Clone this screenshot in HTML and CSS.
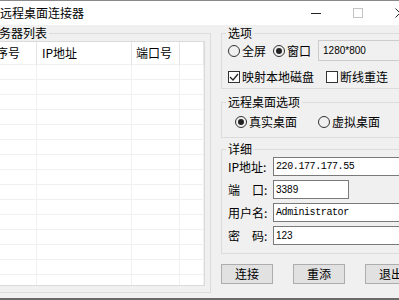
FILE: index.html
```html
<!DOCTYPE html>
<html lang="zh-CN">
<head>
    <meta charset="UTF-8">
    <title>远程桌面连接器</title>
    <link rel="stylesheet" href="styles.css">
</head>
<body>
<div class="window">
    <div class="titlebar">
        <span class="title">远程桌面连接器</span>
        <div class="caption">
            <span class="cap-btn"><i class="ico-min"></i></span>
            <span class="cap-btn"><i class="ico-max"></i></span>
            <span class="cap-btn">
                <svg width="10" height="10" viewBox="0 0 10 10"><path d="M0.5 0.5 L9.5 9.5 M9.5 0.5 L0.5 9.5" stroke="#222" stroke-width="1" fill="none"/></svg>
            </span>
        </div>
    </div>

    <div class="client">
        <!-- server list -->
        <fieldset class="group server-group">
            <legend>服务器列表</legend>
            <div class="list">
                <table>
                    <thead>
                        <tr><th class="c-no">序号</th><th class="c-ip">IP地址</th><th class="c-port">端口号</th><th class="c-rest"></th></tr>
                    </thead>
                    <tbody>
                        <tr><td></td><td></td><td></td><td></td></tr>
                        <tr><td></td><td></td><td></td><td></td></tr>
                        <tr><td></td><td></td><td></td><td></td></tr>
                        <tr><td></td><td></td><td></td><td></td></tr>
                        <tr><td></td><td></td><td></td><td></td></tr>
                        <tr><td></td><td></td><td></td><td></td></tr>
                        <tr><td></td><td></td><td></td><td></td></tr>
                        <tr><td></td><td></td><td></td><td></td></tr>
                        <tr><td></td><td></td><td></td><td></td></tr>
                        <tr><td></td><td></td><td></td><td></td></tr>
                        <tr><td></td><td></td><td></td><td></td></tr>
                        <tr><td></td><td></td><td></td><td></td></tr>
                        <tr><td></td><td></td><td></td><td></td></tr>
                        <tr><td></td><td></td><td></td><td></td></tr>
                        <tr><td></td><td></td><td></td><td></td></tr>
                    </tbody>
                </table>
            </div>
        </fieldset>

        <div class="side">
            <fieldset class="group opt-group">
                <legend>选项</legend>
                <div class="row row-screen">
                    <label class="radio"><span class="dot"></span>全屏</label>
                    <label class="radio on"><span class="dot"></span>窗口</label>
                    <span class="textbox disabled">1280*800</span>
                </div>
                <div class="row row-checks">
                    <label class="check on"><span class="box"><svg width="10" height="10" viewBox="0 0 10 10"><path d="M1 5 L4 8 L9 2" stroke="#222" stroke-width="1.2" fill="none"/></svg></span>映射本地磁盘</label>
                    <label class="check"><span class="box"></span>断线重连</label>
                </div>
            </fieldset>

            <fieldset class="group remote-group">
                <legend>远程桌面选项</legend>
                <div class="row row-remote">
                    <label class="radio on"><span class="dot"></span>真实桌面</label>
                    <label class="radio"><span class="dot"></span>虚拟桌面</label>
                </div>
            </fieldset>

            <fieldset class="group detail-group">
                <legend>详细</legend>
                <div class="field">
                    <span class="field-label">IP地址:</span>
                    <span class="textbox mono wide">220.177.177.55</span>
                </div>
                <div class="field">
                    <span class="field-label">端　口:</span>
                    <span class="textbox short">3389</span>
                </div>
                <div class="field">
                    <span class="field-label">用户名:</span>
                    <span class="textbox mono wide">Administrator</span>
                </div>
                <div class="field">
                    <span class="field-label">密　码:</span>
                    <span class="textbox wide">123</span>
                </div>
            </fieldset>

            <div class="buttons">
                <button>连接</button>
                <button>重添</button>
                <button>退出</button>
            </div>
        </div>
    </div>
</div>
</body>
</html>
```

FILE: styles.css
```css
html, body {
    margin: 0;
    padding: 0;
    overflow: hidden;
    background: #f0f0f0;
}

body {
    font-family: "Noto Sans CJK SC", "Microsoft YaHei", sans-serif;
    font-size: 12px;
    line-height: 16px;
    color: #000;
}

.window {
    width: 441px;
    height: 300px;
    margin-left: -20px;
    box-sizing: border-box;
    border-top: 1px solid #8a8a8a;
    border-bottom: 2px solid #6a6a6a;
    background: #f0f0f0;
    display: flex;
    flex-direction: column;
}

/* title bar */
.titlebar {
    height: 24px;
    background: #fff;
    display: flex;
    align-items: center;
    padding-left: 20px;
}

.caption {
    margin-left: auto;
    display: flex;
    height: 100%;
}

.cap-btn {
    width: 42px;
    height: 100%;
    display: flex;
    align-items: center;
    justify-content: center;
}

.ico-min {
    width: 10px;
    height: 1px;
    background: #222;
}

.ico-max {
    width: 8px;
    height: 8px;
    border: 1px solid #c4c4c4;
}

/* client area */
.client {
    flex: 1;
    display: flex;
    align-items: flex-start;
    padding-left: 2px;
}

.group {
    margin: 0;
    border: 1px solid #dcdcdc;
    min-width: 0;
    box-sizing: border-box;
}

.group legend {
    padding: 0 2px;
    line-height: 16px;
}

.server-group {
    width: 229px;
    padding: 0 5px 6px 8px;
}

.server-group legend {
    margin-left: -6px;
}

.list {
    height: 245px;
    box-sizing: border-box;
    border: 1px solid #dadada;
    background: #fff;
    overflow: hidden;
}

.list table {
    width: 100%;
    table-layout: fixed;
    border-collapse: separate;
    border-spacing: 0;
}

.list th,
.list td {
    box-sizing: border-box;
    padding: 0 0 0 5px;
    text-align: left;
    font-weight: normal;
    border-right: 1px solid #f0f0f0;
    border-bottom: 1px solid #f0f0f0;
}

.list th {
    height: 23px;
    border-right-color: #e5e5e5;
    white-space: nowrap;
}

.list td {
    height: 15px;
}

.list .c-no { width: 45px; padding-left: 4px; }
.list .c-ip { width: 95px; }
.list .c-port { width: 48px; padding-left: 4px; }

/* right column */
.side {
    width: 196px;
    margin-left: 10px;
}

.side .group {
    width: 100%;
    padding: 0 0 0 6px;
}

.side .group legend {
    margin-left: -2px;
}

.row {
    display: flex;
    align-items: center;
}

.radio,
.check {
    display: inline-flex;
    align-items: center;
    white-space: nowrap;
}

.dot {
    width: 12px;
    height: 12px;
    box-sizing: border-box;
    border: 1px solid #333;
    border-radius: 50%;
    margin-right: 2px;
    display: flex;
    align-items: center;
    justify-content: center;
}

.radio.on .dot::after {
    content: "";
    width: 6px;
    height: 6px;
    border-radius: 50%;
    background: #222;
}

.box {
    width: 12px;
    height: 12px;
    box-sizing: border-box;
    border: 1px solid #333;
    margin-right: 2px;
    display: flex;
    align-items: center;
    justify-content: center;
    background: #fff;
}

.opt-group {
    padding-bottom: 3px !important;
}

.row-screen {
    margin-top: -1px;
    height: 21px;
}

.row-screen .radio + .radio {
    margin-left: 7px;
}

.row-screen .textbox {
    margin-left: 7px;
}

.row-checks {
    margin-top: 8px;
    height: 16px;
}

.row-checks .check + .check {
    margin-left: 12px;
}

.remote-group {
    margin-top: 5px !important;
    padding-bottom: 7px !important;
}

.row-remote {
    margin-top: 4px;
    height: 16px;
    padding-left: 7px;
}

.row-remote .radio + .radio {
    margin-left: 21px;
}

.detail-group {
    margin-top: 3px !important;
    padding-bottom: 8px !important;
}

.field {
    display: flex;
    align-items: center;
    height: 19px;
}

.field + .field {
    margin-top: 4px;
}

.field-label {
    width: 45px;
    flex: none;
    white-space: nowrap;
}

.textbox {
    box-sizing: border-box;
    height: 19px;
    border: 1px solid #7a7a7a;
    background: #fff;
    padding-left: 2px;
    font-family: "Liberation Sans", Arial, sans-serif;
    font-size: 10px;
    line-height: 17px;
    white-space: nowrap;
    flex: none;
}

.textbox.mono {
    font-family: "Liberation Mono", "Courier New", monospace;
    letter-spacing: -0.4px;
}

.textbox.wide { width: 140px; }
.textbox.short { width: 76px; }

.textbox.disabled {
    width: 90px;
    height: 21px;
    line-height: 19px;
    padding-left: 4px;
    background: #f0f0f0;
    border-color: #cccccc;
}

.buttons {
    margin-top: 10px;
    display: flex;
    justify-content: space-between;
}

.buttons button {
    width: 52px;
    height: 20px;
    padding: 0;
    margin: 0;
    background: #e1e1e1;
    border: 1px solid #adadad;
    font-family: inherit;
    font-size: 12px;
    line-height: 16px;
    color: #000;
}
```
